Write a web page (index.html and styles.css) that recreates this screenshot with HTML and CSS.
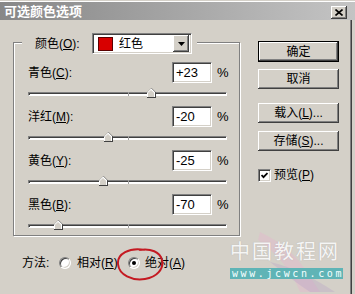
FILE: index.html
```html
<!DOCTYPE html>
<html>
<head>
<meta charset="utf-8">
<link rel="stylesheet" href="styles.css">
</head>
<body>
<div class="topline"></div>
<div class="titlebar">
  <span class="title">可选颜色选项</span>
  <span class="close"><svg width="8" height="7" viewBox="0 0 8 7"><path d="M0.5 0.5 L7.5 6.5 M7.5 0.5 L0.5 6.5" stroke="#000" stroke-width="1.6"/></svg></span>
</div>
<div class="window">
  <div class="main">
    <div class="left">
      <div class="group-head">
        <div class="legend">
          <span class="lbl-color">颜色(<u>O</u>):</span>
          <div class="select">
            <span class="swatch"></span>
            <span class="sel-text">红色</span>
            <span class="sel-btn"><svg width="7" height="4" viewBox="0 0 7 4"><path d="M0 0 H7 L3.5 4 Z" fill="#000"/></svg></span>
          </div>
        </div>
      </div>
      <div class="group">
        <div class="srow">
          <div class="row-top"><span class="label">青色(<u>C</u>):</span><span class="num">+23</span><span class="pct">%</span></div>
          <div class="track"><span class="thumb" style="left:118px"></span></div>
        </div>
        <div class="srow">
          <div class="row-top"><span class="label">洋红(<u>M</u>):</span><span class="num">-20</span><span class="pct">%</span></div>
          <div class="track"><span class="thumb" style="left:75px"></span></div>
        </div>
        <div class="srow">
          <div class="row-top"><span class="label">黄色(<u>Y</u>):</span><span class="num">-25</span><span class="pct">%</span></div>
          <div class="track"><span class="thumb" style="left:70px"></span></div>
        </div>
        <div class="srow">
          <div class="row-top"><span class="label">黑色(<u>B</u>):</span><span class="num">-70</span><span class="pct">%</span></div>
          <div class="track"><span class="thumb" style="left:25px"></span></div>
        </div>
      </div>
    </div>
    <div class="buttons">
      <div class="btn default"><span>确定</span></div>
      <div class="btn b2">取消</div>
      <div class="btn b3">载入(<u>L</u>)...</div>
      <div class="btn b4">存储(<u>S</u>)...</div>
      <div class="check-row">
        <span class="checkbox"><svg width="7" height="7" viewBox="0 0 7 7"><path d="M0.5 3 L2.5 5.2 L6.5 1" stroke="#000" stroke-width="1.8" fill="none"/></svg></span>
        <span class="check-label">预览(<u>P</u>)</span>
      </div>
    </div>
  </div>
  <div class="method">
    <span class="m-label">方法:</span>
    <span class="radio"></span>
    <span class="r-text r1">相对(<u>R</u>)</span>
    <span class="radio checked"></span>
    <span class="r-text r2">绝对(<u>A</u>)</span>
  </div>
</div>
<svg class="mark" width="52" height="36" viewBox="0 0 52 36"><path d="M30 3 C14 0 2 7 3 17 C4 28 17 34 30 32 C42 30 49 22 47 13 C45 5 36 1 24 3" stroke="#c41a22" stroke-width="2" fill="none"/></svg>
<div class="watermark">
  <svg class="swoosh" width="110" height="60" viewBox="0 0 110 60"><path d="M20 0 C40 10 55 20 70 45 L80 60 L60 60 C52 40 38 22 18 8 Z" fill="#e6b4cc" opacity="0.4"/><path d="M30 30 C55 36 70 44 95 60 L70 60 C55 50 45 42 30 30 Z" fill="#b49ac6" opacity="0.3"/></svg>
  <div class="wm-big">中国教程网</div>
  <div class="wm-url">www.jcwcn.com</div>
</div>
</body>
</html>
```
FILE: styles.css
```css
* { box-sizing: border-box; }
html, body { margin: 0; padding: 0; }
body {
  width: 355px;
  height: 294px;
  overflow: hidden;
  position: relative;
  background: #d4d0c8;
  font-family: "Liberation Sans", "Noto Sans CJK SC", sans-serif;
  font-size: 12px;
  line-height: 14px;
  color: #000;
}
u { text-decoration: underline; text-underline-offset: 1px; }

.topline { height: 2px; border-bottom: 1px solid #fff; }
.titlebar {
  height: 18px;
  display: flex;
  align-items: center;
  justify-content: space-between;
  padding: 0 8px 0 4px;
  background: linear-gradient(to right, #878787, #c4c4c4);
}
.title {
  color: #fff;
  font-family: "Noto Sans CJK SC", sans-serif;
  font-weight: bold;
  font-size: 13px;
  line-height: 16px;
}
.close {
  width: 16px;
  height: 13px;
  margin-top: 2px;
  display: flex;
  align-items: center;
  justify-content: center;
  background: #d4d0c8;
  box-shadow: inset -1px -1px #404040, inset 1px 1px #fff, inset -2px -2px #808080;
}

.window {
  width: 352px;
  height: 274px;
  border-right: 1px solid #404040;
  box-shadow: inset -1px 0 #808080;
}
.main { display: flex; padding-left: 13px; }
.left { width: 227px; margin-top: 13px; }

.group-head {
  position: relative;
  z-index: 1;
  height: 21px;
  margin-bottom: -12px;
  padding-left: 9px;
  display: flex;
}
.legend {
  display: flex;
  align-items: center;
  background: #d4d0c8;
  padding: 0 5px 0 13px;
}
.lbl-color { width: 57px; }
.select {
  width: 100px;
  height: 21px;
  display: flex;
  align-items: center;
  background: #fff;
  border: 1px solid;
  border-color: #808080 #fff #fff #808080;
  box-shadow: inset 1px 1px #404040, inset -1px -1px #d4d0c8;
  padding: 2px 2px 2px 5px;
}
.swatch {
  width: 15px;
  height: 14px;
  background: #d80000;
  border: 1px solid #5a0000;
}
.sel-text { margin-left: 6px; }
.sel-btn {
  margin-left: auto;
  width: 16px;
  height: 17px;
  display: flex;
  align-items: center;
  justify-content: center;
  background: #d4d0c8;
  box-shadow: inset -1px -1px #404040, inset 1px 1px #fff, inset -2px -2px #808080;
}

.group {
  height: 194px;
  border: 1px solid #808080;
  box-shadow: inset 1px 1px #fff, 1px 1px #fff;
  padding: 19px 12px 7px 14px;
  display: flex;
  flex-direction: column;
  gap: 10px;
}
.row-top { display: flex; align-items: center; height: 21px; }
.label { flex: 1; }
.num {
  width: 40px;
  height: 21px;
  background: #fff;
  border: 1px solid;
  border-color: #808080 #fff #fff #808080;
  box-shadow: inset 1px 1px #404040, inset -1px -1px #d4d0c8;
  padding: 3px 0 0 3px;
  font-size: 13px;
}
.pct { width: 10px; margin-left: 5px; font-size: 13px; }
.track {
  position: relative;
  margin-top: 9px;
  height: 4px;
  border: 1px solid;
  border-color: #808080 #fff #fff #808080;
  box-shadow: inset 1px 1px #404040;
  background: #fff;
}
.track::after {
  content: "";
  position: absolute;
  left: 99px;
  top: -1px;
  width: 1px;
  height: 4px;
  background: #a0a0a0;
}
.thumb {
  position: absolute;
  z-index: 1;
  top: -5px;
  width: 9px;
  height: 10px;
  background: #404040;
  clip-path: polygon(50% 0, 100% 45%, 100% 100%, 0 100%, 0 45%);
}
.thumb::before {
  content: "";
  position: absolute;
  left: 0; top: 0;
  width: 8px; height: 9px;
  background: #fff;
  clip-path: polygon(50% 0, 100% 45%, 100% 100%, 0 100%, 0 45%);
}
.thumb::after {
  content: "";
  position: absolute;
  left: 1px; top: 2px;
  width: 6px; height: 7px;
  background: #d4d0c8;
  clip-path: polygon(50% 0, 100% 40%, 100% 100%, 0 100%, 0 40%);
}

.buttons { width: 81px; margin-left: 18px; display: flex; flex-direction: column; }
.btn {
  height: 20px;
  display: flex;
  align-items: center;
  justify-content: center;
  background: #d4d0c8;
  box-shadow: inset -1px -1px #404040, inset 1px 1px #fff, inset -2px -2px #808080;
}
.btn.default {
  margin-top: 21px;
  border: 1px solid #000;
  height: 21px;
  box-shadow: inset -1px -1px #404040, inset 1px 1px #fff, inset -2px -2px #808080;
}
.b2 { margin-top: 7px; }
.b3 { margin-top: 14px; }
.b4 { margin-top: 8px; }
.check-row { margin-top: 17px; display: flex; align-items: center; }
.checkbox {
  width: 13px;
  height: 13px;
  display: flex;
  align-items: center;
  justify-content: center;
  background: #fff;
  border: 1px solid;
  border-color: #808080 #fff #fff #808080;
  box-shadow: inset 1px 1px #404040, inset -1px -1px #d4d0c8;
}
.check-label { margin-left: 3px; }

.method {
  margin-top: 20px;
  padding-left: 22px;
  display: flex;
  align-items: center;
  height: 14px;
}
.m-label { width: 37px; }
.radio {
  width: 12px;
  height: 12px;
  border-radius: 50%;
  background: #fff;
  border: 1px solid;
  border-color: #808080 #fff #fff #808080;
  box-shadow: inset 1px 1px #404040, inset -1px -1px #d4d0c8;
  display: flex;
  align-items: center;
  justify-content: center;
}
.radio.checked::after {
  content: "";
  width: 4px;
  height: 4px;
  border-radius: 50%;
  background: #000;
}
.r-text.r1 { margin-left: 6px; width: 51px; }
.r-text.r2 { margin-left: 5px; }

.mark { position: absolute; left: 115px; top: 247px; }

.watermark {
  position: absolute;
  left: 230px;
  top: 232px;
  width: 113px;
}
.swoosh { position: absolute; left: 10px; top: 0; }
.wm-big {
  position: relative;
  margin-top: 8px;
  height: 22px;
  font-family: "Noto Sans CJK SC", sans-serif;
  font-size: 20px;
  line-height: 22px;
  letter-spacing: 2px;
  color: rgba(255, 255, 255, 0.88);
  text-shadow: 0 0 1px rgba(150,150,150,0.6);
}
.wm-url {
  position: relative;
  margin-top: 6px;
  height: 11px;
  background: #5fb4b6;
  color: #f4ffff;
  font-family: "DejaVu Sans Mono", monospace;
  font-size: 10px;
  line-height: 11px;
  letter-spacing: 2.6px;
  padding-left: 2px;
}
```
